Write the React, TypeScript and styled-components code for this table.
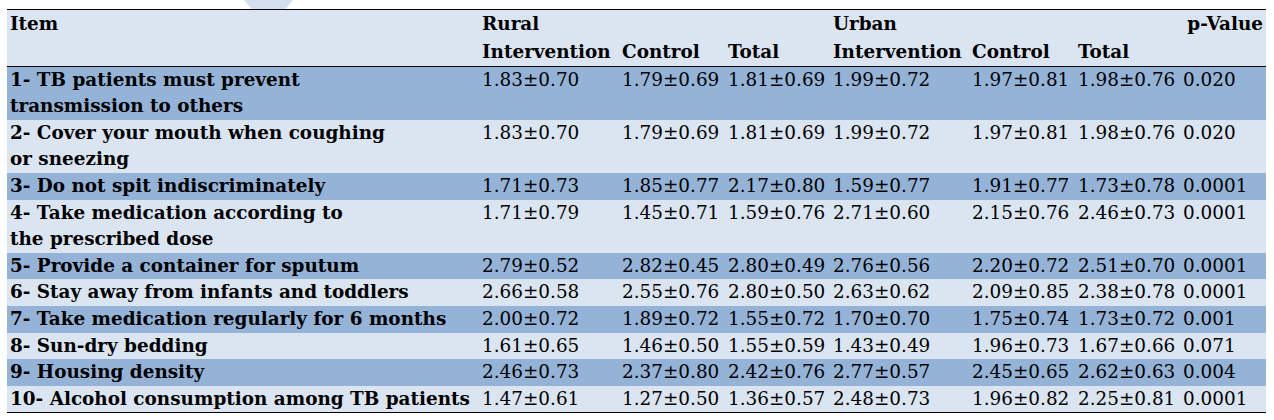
import React from 'react'
import styled, { createGlobalStyle } from 'styled-components'

const GlobalStyle = createGlobalStyle`
  html, body {
    margin: 0;
    padding: 0;
    background: #ffffff;
  }
  body {
    font-family: 'DejaVu Serif', 'Liberation Serif', serif;
    color: #000000;
  }
`

const Page = styled.div`
  position: relative;
  width: 1274px;
  height: 420px;
  padding: 9px 0 0 7px;
  box-sizing: border-box;
  overflow: hidden;
`

const Chevron = styled.svg`
  position: absolute;
  top: 0;
  left: 244px;
`

const Table = styled.table`
  position: relative;
  width: 1259px;
  table-layout: fixed;
  border-collapse: collapse;
  border-top: 1.5px solid #000;
  border-bottom: 1px solid #000;
  font-size: 18.4px;
  line-height: 26.6px;
`

const Head = styled.thead`
  background: #dbe5f1;
  border-bottom: 1px solid #000;
`

const HeadCell = styled.th<{ $right?: boolean }>`
  padding: 1px 3px 0;
  line-height: 26.8px;
  text-align: ${({ $right }) => ($right ? 'right' : 'left')};
  vertical-align: top;
  font-weight: bold;
  white-space: nowrap;
`

const Row = styled.tr<{ $dark: boolean }>`
  background: ${({ $dark }) => ($dark ? '#95b3d7' : '#dbe5f1')};
`

const ItemCell = styled.td`
  padding: 0 3px;
  vertical-align: top;
  font-weight: bold;
  white-space: nowrap;
`

const ValueCell = styled.td`
  padding: 0 3px;
  vertical-align: top;
  white-space: nowrap;
`

const widths = [472, 140, 106, 105, 139, 106, 105, 86]

type Item = { label: string[]; values: string[] }

const items: Item[] = [
  {
    label: ['1- TB patients must prevent', 'transmission to others'],
    values: ['1.83±0.70', '1.79±0.69', '1.81±0.69', '1.99±0.72', '1.97±0.81', '1.98±0.76', '0.020'],
  },
  {
    label: ['2- Cover your mouth when coughing', 'or sneezing'],
    values: ['1.83±0.70', '1.79±0.69', '1.81±0.69', '1.99±0.72', '1.97±0.81', '1.98±0.76', '0.020'],
  },
  {
    label: ['3- Do not spit indiscriminately'],
    values: ['1.71±0.73', '1.85±0.77', '2.17±0.80', '1.59±0.77', '1.91±0.77', '1.73±0.78', '0.0001'],
  },
  {
    label: ['4- Take medication according to', 'the prescribed dose'],
    values: ['1.71±0.79', '1.45±0.71', '1.59±0.76', '2.71±0.60', '2.15±0.76', '2.46±0.73', '0.0001'],
  },
  {
    label: ['5- Provide a container for sputum'],
    values: ['2.79±0.52', '2.82±0.45', '2.80±0.49', '2.76±0.56', '2.20±0.72', '2.51±0.70', '0.0001'],
  },
  {
    label: ['6- Stay away from infants and toddlers'],
    values: ['2.66±0.58', '2.55±0.76', '2.80±0.50', '2.63±0.62', '2.09±0.85', '2.38±0.78', '0.0001'],
  },
  {
    label: ['7- Take medication regularly for 6 months'],
    values: ['2.00±0.72', '1.89±0.72', '1.55±0.72', '1.70±0.70', '1.75±0.74', '1.73±0.72', '0.001'],
  },
  {
    label: ['8- Sun-dry bedding'],
    values: ['1.61±0.65', '1.46±0.50', '1.55±0.59', '1.43±0.49', '1.96±0.73', '1.67±0.66', '0.071'],
  },
  {
    label: ['9- Housing density'],
    values: ['2.46±0.73', '2.37±0.80', '2.42±0.76', '2.77±0.57', '2.45±0.65', '2.62±0.63', '0.004'],
  },
  {
    label: ['10- Alcohol consumption among TB patients'],
    values: ['1.47±0.61', '1.27±0.50', '1.36±0.57', '2.48±0.73', '1.96±0.82', '2.25±0.81', '0.0001'],
  },
]

const App = () => {
  return (
    <Page>
      <GlobalStyle />
      <Chevron width="50" height="12" viewBox="0 0 50 12">
        <polygon points="0,0 49,0 39,12 10,12" fill="#d3dff0" />
      </Chevron>
      <Table>
        <colgroup>
          {widths.map((w, i) => (
            <col key={i} style={{ width: w }} />
          ))}
        </colgroup>
        <Head>
          <tr>
            <HeadCell>Item</HeadCell>
            <HeadCell>Rural</HeadCell>
            <HeadCell />
            <HeadCell />
            <HeadCell>Urban</HeadCell>
            <HeadCell />
            <HeadCell />
            <HeadCell $right>p-Value</HeadCell>
          </tr>
          <tr>
            <HeadCell />
            <HeadCell>Intervention</HeadCell>
            <HeadCell>Control</HeadCell>
            <HeadCell>Total</HeadCell>
            <HeadCell>Intervention</HeadCell>
            <HeadCell>Control</HeadCell>
            <HeadCell>Total</HeadCell>
            <HeadCell />
          </tr>
        </Head>
        <tbody>
          {items.map((item, i) => (
            <Row key={i} $dark={i % 2 === 0}>
              <ItemCell>
                {item.label.map((line, j) => (
                  <React.Fragment key={j}>
                    {j > 0 && <br />}
                    {line}
                  </React.Fragment>
                ))}
              </ItemCell>
              {item.values.map((v, j) => (
                <ValueCell key={j}>{v}</ValueCell>
              ))}
            </Row>
          ))}
        </tbody>
      </Table>
    </Page>
  )
}

export default App
